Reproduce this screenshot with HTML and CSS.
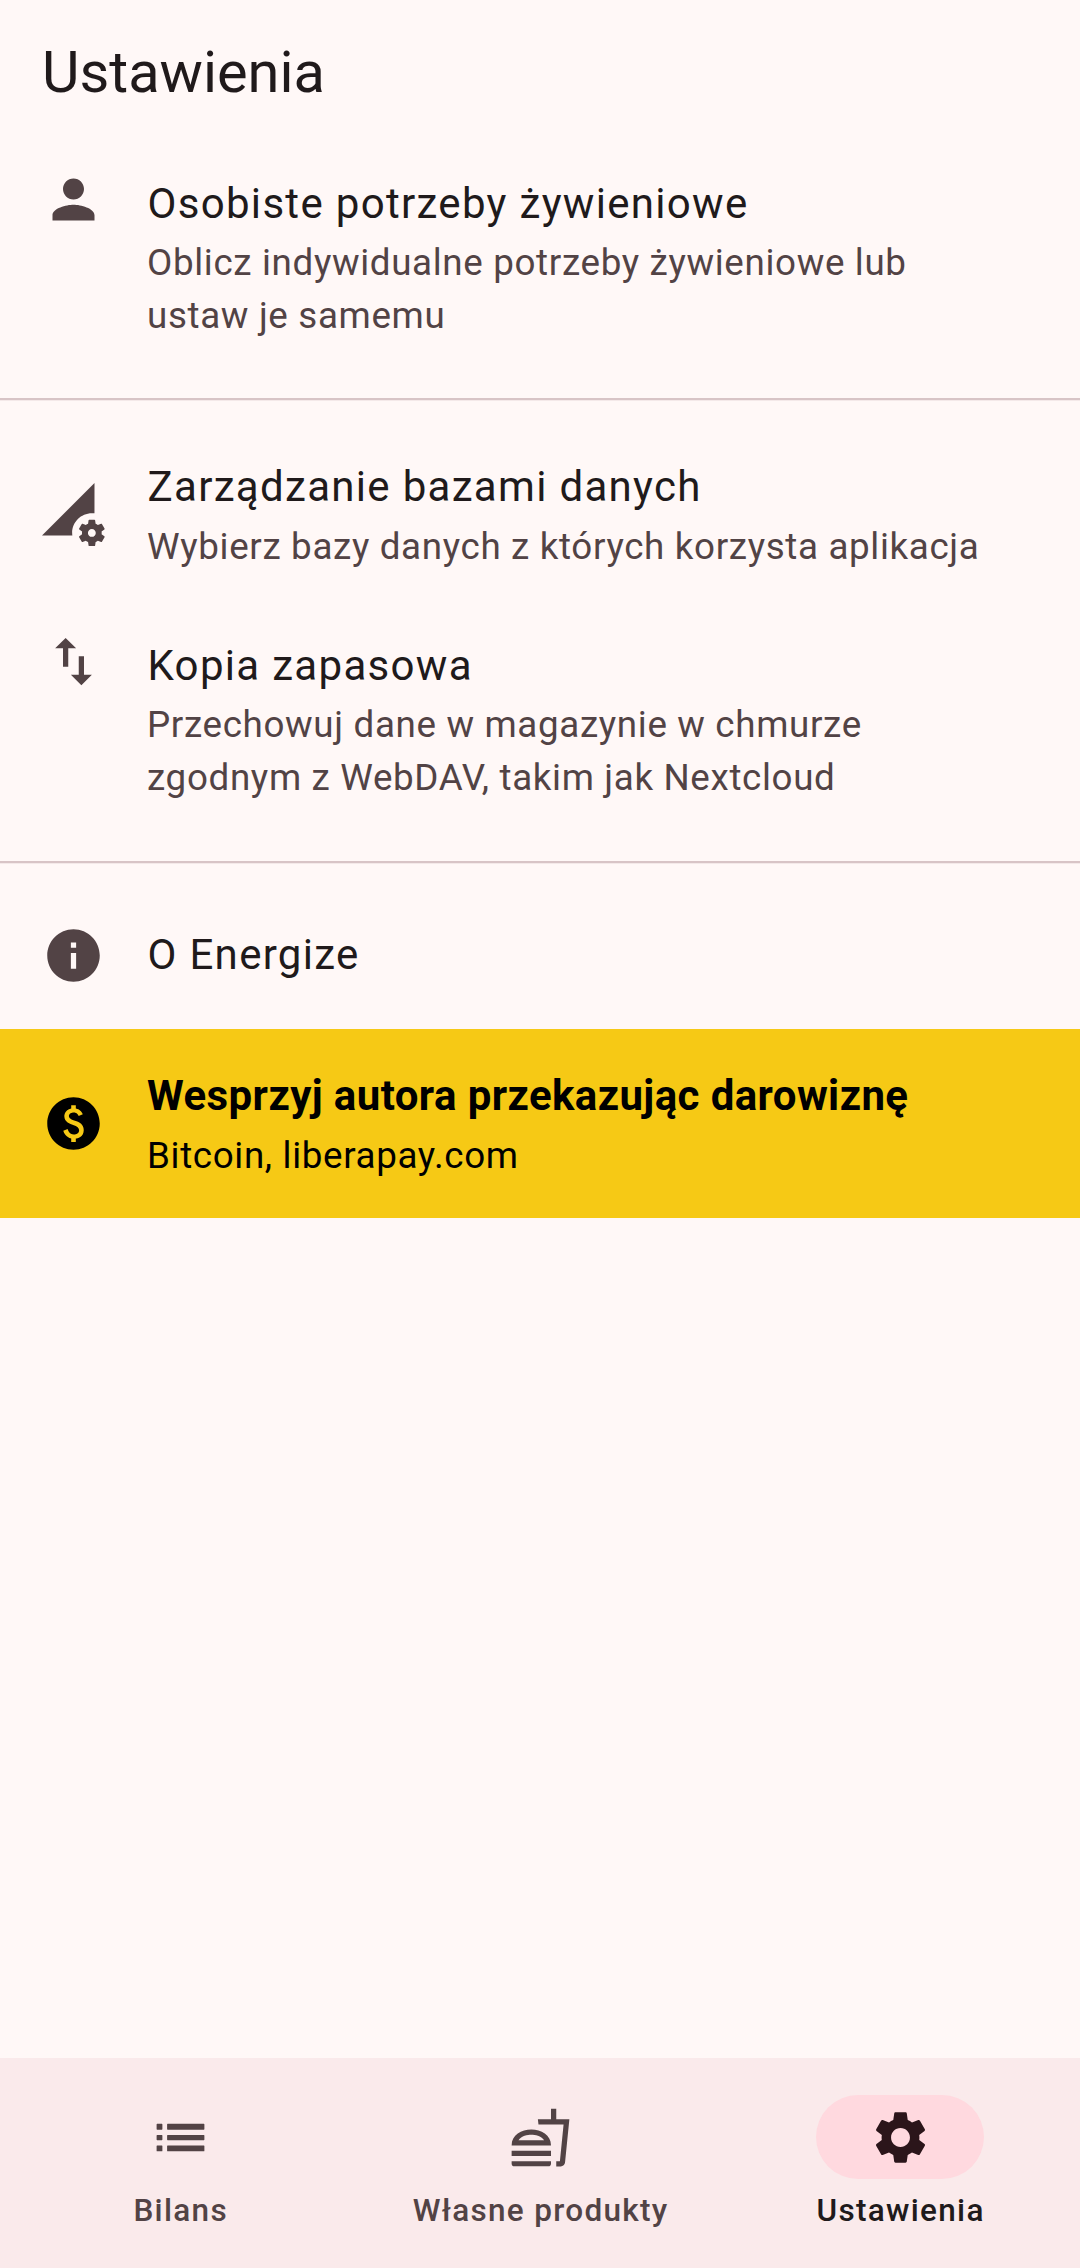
FILE: index.html
```html
<!DOCTYPE html>
<html lang="pl">
<head>
<meta charset="utf-8">
<title>Ustawienia</title>
<link rel="stylesheet" href="styles.css">
</head>
<body>
<div class="screen">
  <header class="app-bar"><h1>Ustawienia</h1></header>
  <main class="settings">
    <section class="group group-needs">
      <div class="item">
        <svg class="icon icon-top" viewBox="0 0 24 24"><path d="M12 12c2.21 0 4-1.79 4-4s-1.79-4-4-4-4 1.79-4 4 1.79 4 4 4zm0 2c-2.67 0-8 1.34-8 4v2h16v-2c0-2.66-5.33-4-8-4z"/></svg>
        <div class="text"><div class="title">Osobiste potrzeby żywieniowe</div><div class="sub">Oblicz indywidualne potrzeby żywieniowe lub<br>ustaw je samemu</div></div>
      </div>
    </section>
    <section class="group group-data">
      <div class="item item-db">
        <svg class="icon icon-db" viewBox="0 0 24 24"><path d="M18.99 11.5c.34 0 .67.03 1 .07L20 0 0 20h11.56c-.04-.33-.07-.66-.07-1 0-4.14 3.36-7.5 7.5-7.5zm3.71 7.99c.02-.16.04-.32.04-.49 0-.17-.01-.33-.04-.49l1.06-.83c.09-.08.12-.21.06-.32l-1-1.73c-.06-.11-.19-.15-.31-.11l-1.24.5c-.26-.2-.54-.37-.85-.49l-.19-1.32c-.01-.12-.12-.21-.24-.21h-2c-.12 0-.23.09-.25.21l-.19 1.32c-.3.13-.59.29-.85.49l-1.24-.5c-.11-.04-.24 0-.31.11l-1 1.73c-.06.11-.04.24.06.32l1.06.83c-.02.16-.03.32-.03.49 0 .17.01.33.03.49l-1.06.83c-.09.08-.12.21-.06.32l1 1.73c.06.11.19.15.31.11l1.24-.5c.26.2.54.37.85.49l.19 1.32c.02.12.12.21.25.21h2c.12 0 .23-.09.25-.21l.19-1.32c.3-.13.59-.29.84-.49l1.25.5c.11.04.24 0 .31-.11l1-1.73c.06-.11.03-.24-.06-.32l-1.07-.83zm-3.71 1.01c-.83 0-1.5-.67-1.5-1.5s.67-1.5 1.5-1.5 1.5.67 1.5 1.5-.67 1.5-1.5 1.5z"/></svg>
        <div class="text"><div class="title">Zarządzanie bazami danych</div><div class="sub">Wybierz bazy danych z których korzysta aplikacja</div></div>
      </div>
      <div class="item">
        <svg class="icon icon-top" viewBox="0 0 24 24"><path d="M16 17.01V10h-2v7.01h-3L15 21l4-3.99h-3zM9 3L5 6.99h3V14h2V6.99h3L9 3z"/></svg>
        <div class="text"><div class="title">Kopia zapasowa</div><div class="sub">Przechowuj dane w magazynie w chmurze<br>zgodnym z WebDAV, takim jak Nextcloud</div></div>
      </div>
    </section>
    <section class="item item-about">
      <svg class="icon" viewBox="0 0 24 24"><path d="M12 2C6.48 2 2 6.48 2 12s4.48 10 10 10 10-4.48 10-10S17.52 2 12 2zm1 15h-2v-6h2v6zm0-8h-2V7h2v2z"/></svg>
      <div class="text"><div class="title">O Energize</div></div>
    </section>
    <section class="item item-donate">
      <svg class="icon" viewBox="0 0 24 24"><path d="M12 2C6.48 2 2 6.48 2 12s4.48 10 10 10 10-4.48 10-10S17.52 2 12 2zm.88 15.76V19h-1.75v-1.29c-.74-.18-2.39-.77-3.02-2.96l1.65-.67c.06.22.58 2.09 2.4 2.09.93 0 1.98-.48 1.98-1.61 0-.96-.7-1.46-2.28-2.03-1.1-.39-3.35-1.03-3.35-3.31 0-.1.01-2.4 2.62-2.96V5h1.75v1.24c1.84.32 2.51 1.79 2.66 2.23l-1.58.67c-.11-.35-.59-1.34-1.9-1.34-.7 0-1.81.37-1.81 1.39 0 .95.86 1.31 2.64 1.9 2.4.83 3.01 2.05 3.01 3.45 0 2.63-2.5 3.13-3.02 3.22z"/></svg>
      <div class="text"><div class="title">Wesprzyj autora przekazując darowiznę</div><div class="sub">Bitcoin, liberapay.com</div></div>
    </section>
  </main>
  <nav class="nav">
    <a class="tab"><span class="pill"><svg viewBox="0 0 24 24"><path d="M3.1 13h1.8q.2 0 .2-.2v-1.6q0-.2-.2-.2H3.1q-.2 0-.2.2v1.6q0 .2.2.2zm0 4.2h1.8q.2 0 .2-.2v-1.8q0-.2-.2-.2H3.1q-.2 0-.2.2V17q0 .2.2.2zm0-8.2h1.8q.2 0 .2-.2V7q0-.2-.2-.2H3.1q-.2 0-.2.2v1.8q0 .2.2.2zm4 4h13.8q.2 0 .2-.2v-1.6q0-.2-.2-.2H7.1q-.2 0-.2.2v1.6q0 .2.2.2zm0 4.2h13.8q.2 0 .2-.2v-1.8q0-.2-.2-.2H7.1q-.2 0-.2.2V17q0 .2.2.2zM6.9 7v1.8q0 .2.2.2h13.8q.2 0 .2-.2V7q0-.2-.2-.2H7.1q-.2 0-.2.2z"/></svg></span><span class="label">Bilans</span></a>
    <a class="tab"><span class="pill"><svg viewBox="0 0 24 24"><path d="M1 21.98c0 .56.45 1.01 1.01 1.01H15c.56 0 1.01-.45 1.01-1.01V21H1v.98zM8.5 8.99C4.75 8.99 1 11 1 15h15c0-4-3.75-6.01-7.5-6.01zM3.62 13c1.11-1.55 3.47-2.01 4.88-2.01s3.77.46 4.88 2.01H3.62zM1 17h15v2H1zM18 5V1h-2v4h-5l.23 2h9.56l-1.4 14H18v2h1.72c.84 0 1.53-.65 1.63-1.47L23 5h-5z"/></svg></span><span class="label">Własne produkty</span></a>
    <a class="tab active"><span class="pill"><svg viewBox="0 0 24 24"><path d="M19.14 12.94c.04-.3.06-.61.06-.94 0-.32-.02-.64-.07-.94l2.03-1.58c.18-.14.23-.41.12-.61l-1.92-3.32c-.12-.22-.37-.29-.59-.22l-2.39.96c-.5-.38-1.03-.7-1.62-.94l-.36-2.54c-.04-.24-.24-.41-.48-.41h-3.84c-.24 0-.43.17-.47.41l-.36 2.54c-.59.24-1.13.57-1.62.94l-2.39-.96c-.22-.08-.47 0-.59.22L2.74 8.87c-.12.21-.08.47.12.61l2.03 1.58c-.05.3-.09.63-.09.94s.02.64.07.94l-2.03 1.58c-.18.14-.23.41-.12.61l1.92 3.32c.12.22.37.29.59.22l2.39-.96c.5.38 1.03.7 1.62.94l.36 2.54c.05.24.24.41.48.41h3.84c.24 0 .44-.17.47-.41l.36-2.54c.59-.24 1.13-.56 1.62-.94l2.39.96c.22.08.47 0 .59-.22l1.92-3.32c.12-.22.07-.47-.12-.61l-2.01-1.58zM12 15.6c-1.98 0-3.6-1.62-3.6-3.6s1.62-3.6 3.6-3.6 3.6 1.62 3.6 3.6-1.62 3.6-3.6 3.6z"/></svg></span><span class="label">Ustawienia</span></a>
  </nav>
</div>
</body>
</html>
```
FILE: styles.css
```css
* { box-sizing: border-box; }
body { margin: 0; background: #fff8f7; color: #201a1b; font-family: Roboto, sans-serif; }
.screen { height: 2268px; display: flex; flex-direction: column; }
.app-bar { height: 142px; padding: 37px 42px 0; }
h1 { margin: 0; font-size: 57.75px; line-height: 70px; font-weight: 400; }
.settings { flex: 1; }
.group { border-bottom: 2px solid #d8c4c6; box-shadow: 0 1px #f4e9e9; }
.group-needs { height: 258px; padding-top: 30px; }
.group-data { height: 463px; padding-top: 55px; }
.item { display: flex; align-items: flex-start; padding: 0 42px; }
.icon { width: 63px; height: 63px; flex: none; margin-right: 42px; fill: #524345; }
.icon-top { margin-top: -4px; }
.text { white-space: nowrap; }
.title { padding-left: 0.5px; font-size: 42px; line-height: 63px; letter-spacing: 1.3125px; }
.sub { margin-top: 1px; font-size: 36.75px; line-height: 53px; letter-spacing: 0.656px; color: #524345; }
.item-db { height: 179px; }
.item-db .sub { margin-top: 2px; }
.icon-db { margin-top: 28px; }
.item-about { height: 166px; align-items: center; padding-top: 18px; }
.item-about .text { margin-top: -2px; }
.item-donate { height: 189px; align-items: center; background: #f6c915; color: #000; }
.item-donate .icon { fill: #000; }
.item-donate .title { padding-left: 0; font-weight: 700; letter-spacing: 0.4px; }
.item-donate .text { margin-top: -1px; }
.item-donate .sub { margin-top: 2px; color: #000; }
.nav { height: 210px; padding-top: 37px; display: flex; background: #faeaeb; color: #524345; }
.tab { flex: 1; display: flex; flex-direction: column; align-items: center; }
.pill { width: 168px; height: 84px; border-radius: 42px; display: flex; align-items: center; justify-content: center; }
.pill svg { width: 63px; height: 63px; fill: currentColor; }
.label { margin-top: 11px; padding-left: 1.3px; font-size: 31.5px; line-height: 42px; font-weight: 500; letter-spacing: 1.3125px; }
.active .pill { background: #ffd9df; color: #2b151a; }
.active .label { color: #201a1b; }
```
